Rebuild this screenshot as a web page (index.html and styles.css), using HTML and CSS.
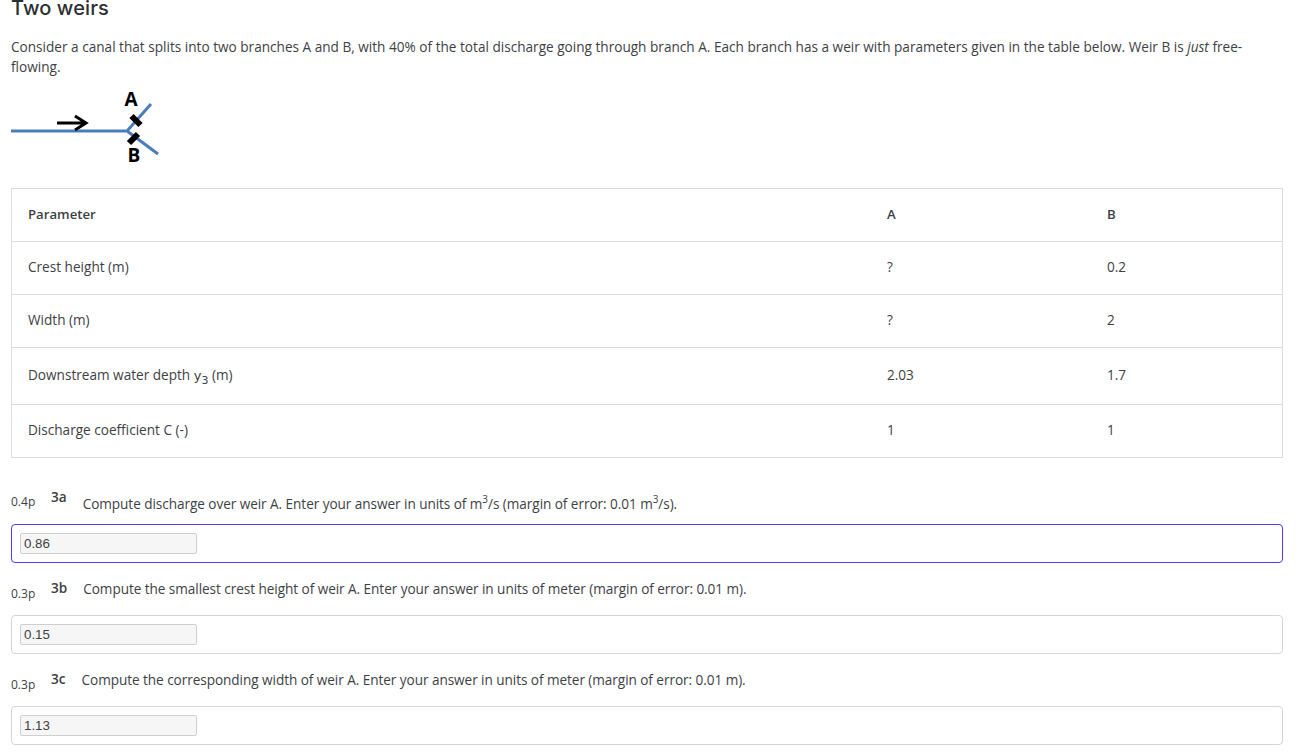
FILE: index.html
```html
<!DOCTYPE html>
<html lang="en">
<head>
<meta charset="utf-8">
<title>Two weirs</title>
<link rel="stylesheet" href="styles.css">
</head>
<body>
<h1 class="title">Two weirs</h1>
<p class="intro">Consider a canal that splits into two branches A and B, with 40% of the total discharge going through branch A. Each branch has a weir with parameters given in the table below. Weir B is <em>just</em> free-flowing.</p>
<svg class="diagram" width="150" height="76" viewBox="0 0 150 76">
  <path d="M0 42H116L140 15M116 42L147 65" fill="none" stroke="#4a7ebb" stroke-width="3"/>
  <path d="M46 34H74M64 27L75 34L64 41" fill="none" stroke="#000" stroke-width="3"/>
  <path d="M120.500 27L129.500 36M127 45L118 54" fill="none" stroke="#000" stroke-width="6"/>
  <text class="diagram-label" x="113.500" y="16.500">A</text>
  <text class="diagram-label" x="116.500" y="72.500">B</text>
</svg>
<table class="params">
  <tr class="row"><th class="cell">Parameter</th><th class="cell">A</th><th class="cell">B</th></tr>
  <tr class="row"><td class="cell">Crest height (m)</td><td class="cell">?</td><td class="cell">0.2</td></tr>
  <tr class="row"><td class="cell">Width (m)</td><td class="cell">?</td><td class="cell">2</td></tr>
  <tr class="row tall"><td class="cell">Downstream water depth <span class="math">y<sub>3</sub></span> (m)</td><td class="cell">2.03</td><td class="cell">1.7</td></tr>
  <tr class="row"><td class="cell">Discharge coefficient C (-)</td><td class="cell">1</td><td class="cell">1</td></tr>
</table>
<section class="question first">
  <div class="q-head">
    <span class="points">0.4p</span><span class="q-num">3a</span>
    <span class="q-text">Compute discharge over weir A. Enter your answer in units of m<sup>3</sup>/s (margin of error: 0.01 m<sup>3</sup>/s).</span>
  </div>
  <div class="answer active"><input class="field" value="0.86"></div>
</section>
<section class="question">
  <div class="q-head">
    <span class="points">0.3p</span><span class="q-num">3b</span>
    <span class="q-text">Compute the smallest crest height of weir A. Enter your answer in units of meter (margin of error: 0.01 m).</span>
  </div>
  <div class="answer"><input class="field" value="0.15"></div>
</section>
<section class="question">
  <div class="q-head">
    <span class="points">0.3p</span><span class="q-num">3c</span>
    <span class="q-text">Compute the corresponding width of weir A. Enter your answer in units of meter (margin of error: 0.01 m).</span>
  </div>
  <div class="answer"><input class="field" value="1.13"></div>
</section>
</body>
</html>
```
FILE: styles.css
```css
html, body { margin: 0; background: #fff; overflow: hidden; }
body {
  height: 753px;
  padding: 0 17px 0 11px;
  box-sizing: border-box;
  font-family: "Open Sans", "Noto Sans", sans-serif;
  font-size: 13.6px;
  line-height: 20px;
  color: #3d3f45;
}
.title {
  margin: -5px 0 0;
  font: 500 20px/26px Inter, sans-serif;
  letter-spacing: 0.1px;
  color: #2d2f33;
}
.intro { margin: 16px 0 0; letter-spacing: 0.005px; }
.diagram { display: block; margin-top: 12px; }
.diagram-label { font: 700 19px "Open Sans", sans-serif; fill: #000; }
.params {
  width: 100%;
  margin-top: 23px;
  border-collapse: collapse;
  border: 1px solid #dcdcdc;
  table-layout: fixed;
}
.row { height: 53px; border-bottom: 1px solid #dcdcdc; }
.row.tall { height: 57px; }
.cell { padding: 0 16px 2px; text-align: left; font-weight: 400; }
th.cell { font-weight: 600; font-size: 13.2px; }
.cell:nth-child(1) { width: 827px; }
.cell:nth-child(2) { width: 188px; }
.math { font-family: "DejaVu Sans", sans-serif; font-size: 13px; }
sub { font-size: 11px; line-height: 0; }
sup { font-size: 10px; line-height: 0; }
.question { margin-top: 10px; }
.question.first { margin-top: 24px; }
.q-head { display: flex; align-items: flex-start; gap: 16px; height: 29px; }
.points { width: 24px; font-size: 12px; padding-top: 11px; flex: none; }
.first .points { padding-top: 10px; }
.q-num { font-weight: 600; flex: none; padding-top: 5px; }
.q-text { padding-top: 6px; letter-spacing: -0.06px; }
.first .q-text { padding-top: 12px; }
.answer {
  margin-top: 13px;
  height: 39px;
  box-sizing: border-box;
  padding: 8px;
  border: 1px solid #d5d5d5;
  border-radius: 4px;
}
.answer.active { border-color: #5b34f0; }
.field {
  display: block;
  width: 177px;
  height: 21px;
  box-sizing: border-box;
  padding: 0 3px;
  border: 1px solid #cfcfcf;
  border-radius: 2px;
  background: #f6f6f6;
  font: 13.33px "Liberation Sans", sans-serif;
  color: #3d3f45;
}
```
